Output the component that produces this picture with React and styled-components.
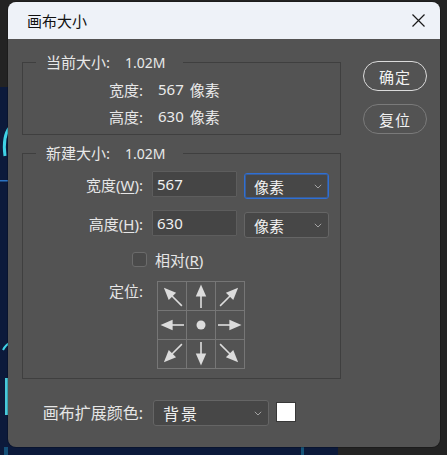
import React from "react";
import styled, { createGlobalStyle } from "styled-components";

const GlobalStyle = createGlobalStyle`
  html, body {
    margin: 0;
    padding: 0;
    background: #232323;
  }
  body {
    font-family: "Noto Sans", "Noto Sans CJK SC", sans-serif;
  }
`;

const Screen = styled.div`
  position: relative;
  box-sizing: border-box;
  width: 447px;
  height: 455px;
  padding: 2px 0 0 8px;
  overflow: hidden;
  background: #232323;
`;

const Backdrop = styled.svg`
  position: absolute;
  inset: 0;
`;

const Dialog = styled.div`
  position: relative;
  z-index: 1;
  width: 432px;
  height: 445px;
  border-radius: 8px;
  overflow: hidden;
  background: #535353;
  color: #e6e6e6;
  font-size: 15px;
  box-shadow: 0 0 0 1px rgba(0, 0, 0, 0.2);
`;

const TitleBar = styled.div`
  height: 37px;
  display: flex;
  align-items: center;
  justify-content: space-between;
  padding: 0 15px 0 19px;
  background: #eef2f8;
  color: #111;
  font-size: 15px;
`;

const Body = styled.div`
  display: flex;
  gap: 22px;
  padding: 13px 13px 0 14px;
`;

const Main = styled.div`
  width: 319px;
`;

const Side = styled.div`
  display: flex;
  flex-direction: column;
  gap: 13px;
  margin-top: 9px;
`;

const PillButton = styled.button`
  box-sizing: border-box;
  width: 64px;
  height: 30px;
  border-radius: 15px;
  border: 1.5px solid ${(p) => (p.$primary ? "#dadada" : "#7a7a7a")};
  background: transparent;
  color: #f2f2f2;
  font-family: "Noto Sans", "Noto Sans CJK SC", sans-serif;
  font-size: 15px;
  padding: 0;
  letter-spacing: 1px;
`;

const Group = styled.fieldset`
  margin: ${(p) => (p.$second ? "8px" : "0")} 0 0 0;
  padding: ${(p) => p.$pad};
  min-width: 0;
  border: 1px solid #3f3f3f;
`;

const Legend = styled.legend`
  height: 20px;
  margin-left: 13px;
  padding: 0 17px 0 10px;
  line-height: 20px;
  color: #e8e8e8;
`;

const LegendValue = styled.span`
  margin-left: 15px;
  font-size: 14px;
  line-height: 1;
`;

const InfoGrid = styled.div`
  display: grid;
  grid-template-columns: 120px auto;
  grid-auto-rows: 27px;
  column-gap: 15px;
  align-items: center;
`;

const Label = styled.div`
  text-align: right;
  white-space: nowrap;
  font-size: ${(p) => p.$size || 15}px;
  line-height: 20px;
  align-self: ${(p) => (p.$top ? "start" : "center")};
`;

const Value = styled.div`
  display: flex;
  gap: 6px;
  color: #ebebeb;
`;

const FormRow = styled.div`
  display: grid;
  grid-template-columns: 120px 85px 85px;
  column-gap: 9px;
  align-items: start;
  height: 28px;
  margin-top: ${(p) => p.$mt || 0}px;
  & > :last-child {
    margin-left: -2px;
    margin-top: 2px;
  }
`;

const FormLabel = styled(Label)`
  line-height: 26px;
`;

const Key = styled.u`
  text-underline-offset: 2px;
`;

const TextBox = styled.input`
  box-sizing: border-box;
  width: 85px;
  height: 26px;
  padding: 0 0 0 4px;
  border: 1px solid #5d5d5d;
  border-radius: 1px;
  background: #454545;
  color: #f0f0f0;
  font-family: "Noto Sans", "Noto Sans CJK SC", sans-serif;
  font-size: 15px;
  outline: none;
`;

const Dropdown = styled.div`
  box-sizing: border-box;
  width: ${(p) => p.$width}px;
  height: 26px;
  display: flex;
  align-items: center;
  justify-content: space-between;
  padding: 0 6px 0 9px;
  border: 1px solid ${(p) => (p.$focused ? "#2f6fd4" : "#656565")};
  box-shadow: ${(p) => (p.$focused ? "inset 0 0 0 1px rgba(47,111,212,0.55)" : "none")};
  border-radius: 3px;
  background: #474747;
  color: #f2f2f2;
  font-size: ${(p) => p.$size || 15}px;
  letter-spacing: ${(p) => p.$spacing || 0}px;
`;

const CheckRow = styled.label`
  display: flex;
  align-items: center;
  gap: 8px;
  height: 15px;
  margin: 14px 0 0 109px;
  font-size: 15px;
`;

const CheckBox = styled.span`
  box-sizing: border-box;
  width: 15px;
  height: 15px;
  border: 1px solid #6b6b6b;
  border-radius: 3px;
  background: #4a4a4a;
`;

const AnchorRow = styled.div`
  display: grid;
  grid-template-columns: 120px auto;
  column-gap: 14px;
  margin-top: 14px;
`;

const AnchorGrid = styled.div`
  display: grid;
  grid-template-columns: repeat(3, 28px);
  grid-auto-rows: 28px;
  gap: 1px;
  padding: 1px;
  width: max-content;
  background: #767676;
`;

const AnchorCell = styled.div`
  display: flex;
  align-items: center;
  justify-content: center;
  background: #535353;
`;

const BottomRow = styled.div`
  display: grid;
  grid-template-columns: 121px auto auto;
  column-gap: 10px;
  align-items: center;
  justify-content: start;
  margin: 21px 0 0 14px;
  & > :last-child {
    margin-left: -3px;
  }
`;

const Swatch = styled.div`
  box-sizing: border-box;
  width: 20px;
  height: 20px;
  border: 1px solid #383838;
  background: #ffffff;
  margin-top: -2px;
`;

const Chevron = () => (
  <svg width="8" height="5" viewBox="0 0 8 5">
    <path d="M0.8 0.8 L4 4 L7.2 0.8" stroke="#a2a2a2" strokeWidth="1" fill="none" />
  </svg>
);

const CloseIcon = () => (
  <svg width="13" height="13" viewBox="0 0 13 13">
    <path d="M0.5 0.5 L12.5 12.5 M12.5 0.5 L0.5 12.5" stroke="#1a1a1a" strokeWidth="1.2" />
  </svg>
);

const Arrow = ({ angle }) => {
  const len = angle % 90 === 0 ? 12 : 14;
  return (
    <svg width="28" height="28" viewBox="0 0 28 28">
      <g transform={`rotate(${angle} 14 14)`} fill="#dcdcdc">
        <path d="M14 2.5 L19.2 14.6 L8.8 14.6 Z" />
        <rect x="13.2" y="14" width="1.6" height={len} />
      </g>
    </svg>
  );
};

const anchors = [-45, 0, 45, -90, null, 90, -135, 180, 135];

const Select = ({ children, ...rest }) => (
  <Dropdown {...rest}>
    <span>{children}</span>
    <Chevron />
  </Dropdown>
);

const App = () => {
  return (
    <Screen>
      <GlobalStyle />
      <Backdrop width="447" height="455" viewBox="0 0 447 455">
        <rect x="0" y="87" width="338" height="368" fill="#0c1a3b" />
        <path d="M10 127 C 5 133, 3 141, 5 156" stroke="#3fd2e6" strokeWidth="3" fill="none" />
        <rect x="0" y="180" width="10" height="1.5" fill="#2b72c2" />
        <path d="M10 343 C 7 344, 5 346, 3 350" stroke="#3fd2e6" strokeWidth="2" fill="none" />
        <rect x="5" y="378" width="3" height="37" fill="#47c9da" />
        <rect x="5" y="378" width="6" height="2" fill="#47c9da" />
        <rect x="4" y="447" width="4" height="8" fill="#1a6a94" opacity="0.7" />
        <rect x="301" y="447" width="3" height="8" fill="#1d7ba3" opacity="0.6" />
      </Backdrop>
      <Dialog>
        <TitleBar>
          <span>画布大小</span>
          <CloseIcon />
        </TitleBar>
        <Body>
          <Main>
            <Group $pad="4px 0 4px 0">
              <Legend>
                当前大小:<LegendValue>1.02M</LegendValue>
              </Legend>
              <InfoGrid>
                <Label>宽度:</Label>
                <Value>
                  <span>567</span>
                  <span>像素</span>
                </Value>
                <Label>高度:</Label>
                <Value>
                  <span>630</span>
                  <span>像素</span>
                </Value>
              </InfoGrid>
            </Group>
            <Group $second $pad="8px 0 9px 0">
              <Legend>
                新建大小:<LegendValue>1.02M</LegendValue>
              </Legend>
              <FormRow>
                <FormLabel>
                  宽度(<Key>W</Key>):
                </FormLabel>
                <TextBox readOnly defaultValue="567" />
                <Select $width={85} $focused>
                  像素
                </Select>
              </FormRow>
              <FormRow $mt={11}>
                <FormLabel>
                  高度(<Key>H</Key>):
                </FormLabel>
                <TextBox readOnly defaultValue="630" />
                <Select $width={85}>像素</Select>
              </FormRow>
              <CheckRow>
                <CheckBox />
                <span>
                  相对(<Key>R</Key>)
                </span>
              </CheckRow>
              <AnchorRow>
                <Label $top>定位:</Label>
                <AnchorGrid>
                  {anchors.map((a, i) => (
                    <AnchorCell key={i}>
                      {a === null ? (
                        <svg width="10" height="10" viewBox="0 0 10 10">
                          <circle cx="5" cy="5" r="4.5" fill="#dcdcdc" />
                        </svg>
                      ) : (
                        <Arrow angle={a} />
                      )}
                    </AnchorCell>
                  ))}
                </AnchorGrid>
              </AnchorRow>
            </Group>
          </Main>
          <Side>
            <PillButton $primary>确定</PillButton>
            <PillButton>复位</PillButton>
          </Side>
        </Body>
        <BottomRow>
          <Label $size={16}>画布扩展颜色:</Label>
          <Select $width={116} $size={16} $spacing={2}>
            背景
          </Select>
          <Swatch />
        </BottomRow>
      </Dialog>
    </Screen>
  );
};

export default App;
